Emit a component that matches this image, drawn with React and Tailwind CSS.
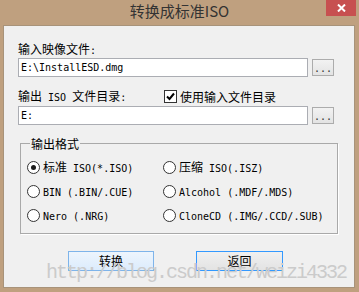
const cjk = /[\u3000-\u9fff\uff00-\uffef]/

// SimSun-ish metrics: CJK 12px wide, ASCII 6px wide
function T({ s }) {
  const parts = s.match(/[\u3000-\u9fff\uff00-\uffef]+|[^\u3000-\u9fff\uff00-\uffef]+/g) || []
  return parts.map((p, i) =>
    cjk.test(p) ? (
      <span key={i} className="font-['Noto_Sans_CJK_SC',sans-serif] text-[12px]">{p}</span>
    ) : (
      <span key={i} className="font-['DejaVu_Sans_Mono',monospace] text-[10px] whitespace-pre">{p}</span>
    )
  )
}

function Browse() {
  return (
    <div className="w-[22px] h-[17px] border border-[#acacac] bg-gradient-to-b from-[#f2f2f2] to-[#e3e3e3] flex items-end justify-center pb-[1px]">
      <span className="font-['DejaVu_Sans_Mono',monospace] text-[10px] leading-[10px] text-[#333]">...</span>
    </div>
  )
}

function Radio({ checked, label }) {
  return (
    <div className="flex items-center">
      <div className="w-[13px] h-[13px] rounded-full border border-[#333] bg-white flex items-center justify-center">
        {checked && <div className="w-[5px] h-[5px] rounded-full bg-[#1a1a1a]" />}
      </div>
      <div className="ml-[3px] leading-[12px] text-black whitespace-nowrap"><T s={label} /></div>
    </div>
  )
}

export default function App() {
  return (
    <div className="w-[359px] h-[292px] bg-[#bfa07f] flex flex-col overflow-hidden">
      {/* title bar */}
      <div className="h-[25px] relative flex justify-center">
        <span className="font-['Noto_Sans_CJK_SC',sans-serif] text-[15px] leading-[22px] text-[#333]">转换成标准ISO</span>
        <div className="absolute top-0 right-[3px] w-[30px] h-[16px] bg-[#c75050] flex items-center justify-center">
          <svg width="9" height="8" viewBox="0 0 9 8">
            <path d="M1 0.5 L8 7.5 M8 0.5 L1 7.5" stroke="#fff" strokeWidth="2" />
          </svg>
        </div>
      </div>

      {/* client area */}
      <div className="ml-[3px] mr-[4px] h-[263px] border border-[#a8937a] bg-[#f0f0f0] relative pl-[14px] pt-[16px]">
        <div className="h-[12px] leading-[12px] text-black"><T s="输入映像文件:" /></div>
        <div className="mt-[4px] flex items-center gap-[4px]">
          <div className="w-[290px] h-[19px] border border-[#abadb3] bg-white px-[2px] flex items-center leading-[12px] text-black">
            <T s="E:\InstallESD.dmg" />
          </div>
          <Browse />
        </div>

        <div className="mt-[13px] h-[13px] flex items-center">
          <div className="w-[146px] leading-[12px] text-black"><T s="输出 ISO 文件目录:" /></div>
          <div className="w-[13px] h-[13px] border border-[#333] bg-white flex items-center justify-center">
            <svg width="11" height="11" viewBox="0 0 11 11">
              <path d="M2 5.5 L4.5 8 L9 2.5" stroke="#000" strokeWidth="2" fill="none" />
            </svg>
          </div>
          <div className="ml-[3px] leading-[12px] text-black"><T s="使用输入文件目录" /></div>
        </div>
        <div className="mt-[3px] flex items-center gap-[4px]">
          <div className="w-[290px] h-[19px] border border-[#abadb3] bg-white px-[2px] flex items-center leading-[12px] text-black">
            <T s="E:" />
          </div>
          <Browse />
        </div>

        <fieldset className="mt-[12px] ml-[2px] w-[318px] border border-[#a9a9a9] shadow-[1px_1px_0_#fff] pt-[6px] pb-[6px] pl-[6px]">
          <legend className="ml-[3px] px-[1px] h-[12px] leading-[12px] text-black"><T s="输出格式" /></legend>
          <div className="grid grid-cols-[136px_1fr] auto-rows-[24px] items-center">
            <Radio checked label="标准 ISO(*.ISO)" />
            <Radio label="压缩 ISO(.ISZ)" />
            <Radio label="BIN (.BIN/.CUE)" />
            <Radio label="Alcohol (.MDF/.MDS)" />
            <Radio label="Nero (.NRG)" />
            <Radio label="CloneCD (.IMG/.CCD/.SUB)" />
          </div>
        </fieldset>

        <div className="mt-[17px] ml-[50px] flex gap-[42px]">
          <button className="w-[86px] h-[20px] border border-[#7eb4ea] bg-gradient-to-b from-[#edf5fd] to-[#dcecfc] flex items-center justify-center leading-[12px] text-black">
            <T s="转换" />
          </button>
          <button className="w-[87px] h-[20px] border border-[#3399ff] bg-gradient-to-b from-[#f0f0f0] to-[#e3e3e3] flex items-center justify-center leading-[12px] text-black">
            <T s="返回" />
          </button>
        </div>

        {/* watermark */}
        <div className="absolute left-[42px] top-[237px] font-['Liberation_Mono',monospace] text-[20px] leading-[20px] tracking-[-2px] text-[#cbcbcb] whitespace-nowrap pointer-events-none">
          http://blog.csdn.net/weizi4332
        </div>
      </div>
    </div>
  )
}
